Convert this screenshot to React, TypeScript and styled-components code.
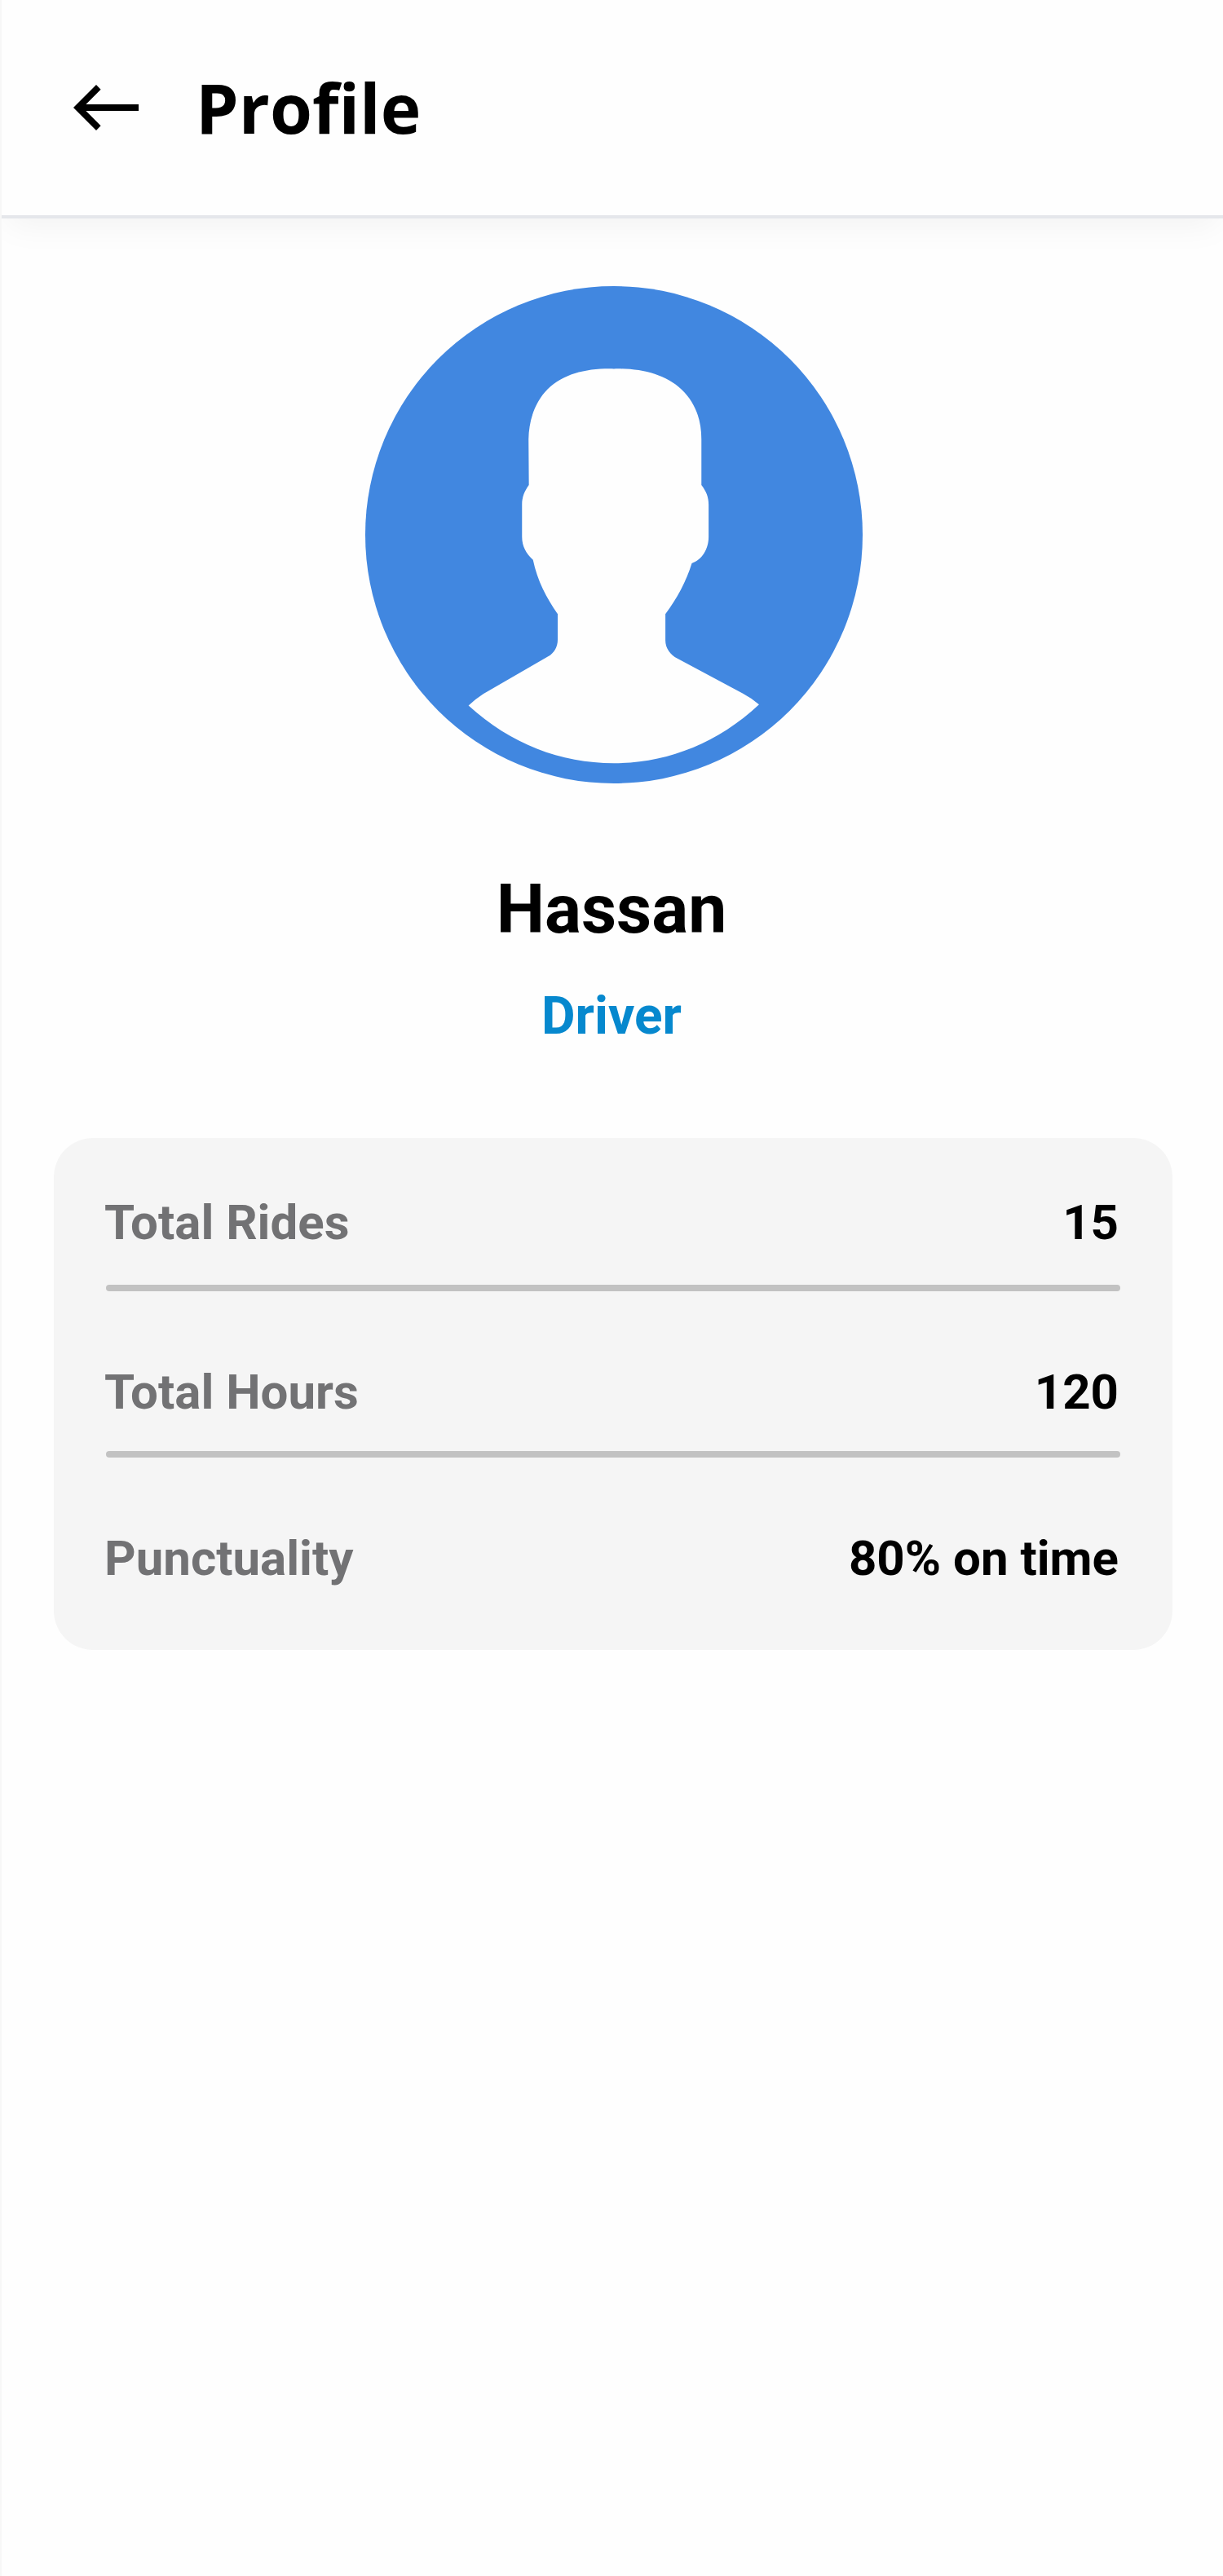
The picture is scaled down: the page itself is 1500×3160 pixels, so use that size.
import React from "react";
import styled, { createGlobalStyle } from "styled-components";

const GlobalStyle = createGlobalStyle`
  * { box-sizing: border-box; }
  body { margin: 0; background: #fefefe; }
`;

const Page = styled.div`
  width: 1500px;
  height: 3160px;
  overflow: hidden;
  border-left: 2px solid #f7f7f7;
  background: #fefefe;
  font-family: Roboto, sans-serif;
  color: #000;
`;

const Screen = styled.div`
  width: 1500px;
  display: flex;
  flex-direction: column;
`;

const Header = styled.header`
  height: 268px;
  padding-left: 88px;
  display: flex;
  align-items: center;
  gap: 70px;
  background: #fefefe;
  border-bottom: 4px solid #e5e7eb;
  box-shadow: 0 16px 40px -8px rgba(0, 0, 0, 0.05);
`;

const BackButton = styled.button`
  display: flex;
  padding: 0;
  border: 0;
  background: none;
  color: inherit;
`;

const Title = styled.h1`
  margin: 0;
  font: 700 84px/120px "Open Sans", sans-serif;
`;

const Profile = styled.main`
  display: flex;
  flex-direction: column;
  align-items: center;
  padding: 83px 64px 0;
`;

const Avatar = styled.svg`
  width: 610px;
  height: 610px;
  margin-left: 2px;
`;

const Name = styled.h2`
  margin: 105px 4px 0 0;
  font-size: 84px;
  line-height: 99px;
  font-weight: 700;
`;

const Role = styled.p`
  margin: 44px 4px 0 0;
  font-size: 64px;
  line-height: 75px;
  font-weight: 700;
  color: #0688ce;
`;

const Card = styled.dl`
  width: 100%;
  height: 628px;
  margin: 112px 0 0;
  padding: 68px 64px 0;
  border-radius: 48px;
  background: #f5f5f5;
`;

const Row = styled.div<{ $height: number }>`
  display: flex;
  justify-content: space-between;
  height: ${(p) => p.$height}px;
  margin: 0 2px 0 -2px;
  font-size: 60px;
  line-height: 71px;
  font-weight: 700;
`;

const Label = styled.dt`
  color: #727274;
`;

const Value = styled.dd`
  margin: 0;
`;

const Divider = styled.div<{ $gap: number }>`
  height: 8px;
  margin-bottom: ${(p) => p.$gap}px;
  border-radius: 4px;
  background: #c2c2c2;
`;

const stats = [
  { label: "Total Rides", value: "15", height: 112, gap: 88 },
  { label: "Total Hours", value: "120", height: 108, gap: 88 },
  { label: "Punctuality", value: "80% on time", height: 71, gap: 0 },
];

export default function App() {
  return (
    <>
      <GlobalStyle />
      <Page>
        <Screen>
          <Header>
            <BackButton aria-label="Back">
              <svg width="80" height="56" viewBox="0 0 80 56">
                <path d="M0 28 28 0l5.6 5.7L15.4 24H80v8H15.4l18.2 18.3L28 56z" fill="currentColor" />
              </svg>
            </BackButton>
            <Title>Profile</Title>
          </Header>
          <Profile>
            <Avatar viewBox="66 49 1450 1450">
              <circle cx="791" cy="774" r="725" fill="#4187e0" />
              <path
                fill="#fefefe"
                d="M791 290C870 288 940 306 988 350C1028 388 1046 438 1046 495V629C1060 647 1067 664 1067 686V780C1067 817 1047 847 1018 857C1002 909 975 960 941 1005V1082C941 1105 955 1124 976 1135L1167 1237Q1190 1249 1214 1269C1089 1386 940 1440 791 1440C635 1440 490 1384 367 1272Q388 1252 410 1238L599 1129C617 1119 627 1101 627 1080V1005C594 957 568 909 555 847C535 829 523 807 523 780V686C523 664 530 647 543 629L542 495C543 438 562 385 598 349C645 304 712 288 791 290Z"
              />
            </Avatar>
            <Name>Hassan</Name>
            <Role>Driver</Role>
            <Card>
              {stats.map((s, i) => (
                <React.Fragment key={s.label}>
                  <Row $height={s.height}>
                    <Label>{s.label}</Label>
                    <Value>{s.value}</Value>
                  </Row>
                  {i < stats.length - 1 && <Divider $gap={s.gap} />}
                </React.Fragment>
              ))}
            </Card>
          </Profile>
        </Screen>
      </Page>
    </>
  );
}
